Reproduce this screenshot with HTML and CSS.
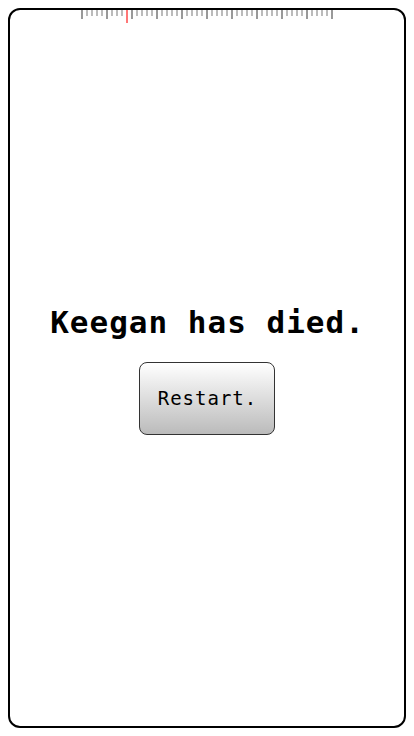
FILE: index.html
```html
<!DOCTYPE html>
<html>
<head>
<meta charset="utf-8">
<link rel="stylesheet" href="styles.css">
</head>
<body>
<div class="frame">
  <div class="ruler"><span class="marker"></span></div>
  <div class="content">
    <h1 class="title">Keegan has died.</h1>
    <button class="restart">Restart.</button>
  </div>
</div>
</body>
</html>
```
FILE: styles.css
```css
html, body {
  margin: 0;
  padding: 0;
  background: #fff;
}
body {
  padding: 8px;
}
.frame {
  position: relative;
  box-sizing: border-box;
  width: 398px;
  height: 720px;
  border: 2px solid #000;
  border-radius: 12px;
  display: flex;
  flex-direction: column;
}
.ruler {
  position: absolute;
  top: 0;
  left: 71px;
  width: 252px;
  height: 13px;
  background:
    repeating-linear-gradient(to right, #999 0 2px, transparent 2px 25px) 0 0 / 252px 9px no-repeat,
    repeating-linear-gradient(to right, #bbb 0 2px, transparent 2px 5px) 0 0 / 252px 6px no-repeat;
}
.marker {
  position: absolute;
  left: 45px;
  top: 0;
  width: 2px;
  height: 13px;
  background: #f77;
}
.content {
  flex: 1;
  display: flex;
  flex-direction: column;
  align-items: center;
  justify-content: center;
}
.title {
  margin: 0 0 0 1px;
  font-family: "DejaVu Sans Mono", monospace;
  font-weight: bold;
  font-size: 31px;
  letter-spacing: 1px;
  line-height: 40px;
  color: #000;
}
.restart {
  margin-top: 20px;
  box-sizing: border-box;
  width: 136px;
  height: 73px;
  border: 1px solid #333;
  border-radius: 8px;
  background: linear-gradient(to bottom, #fff, #bbb);
  font-family: "DejaVu Sans Mono", monospace;
  font-size: 19px;
  letter-spacing: 1px;
  color: #000;
  padding: 0 0 0 1px;
}
```
